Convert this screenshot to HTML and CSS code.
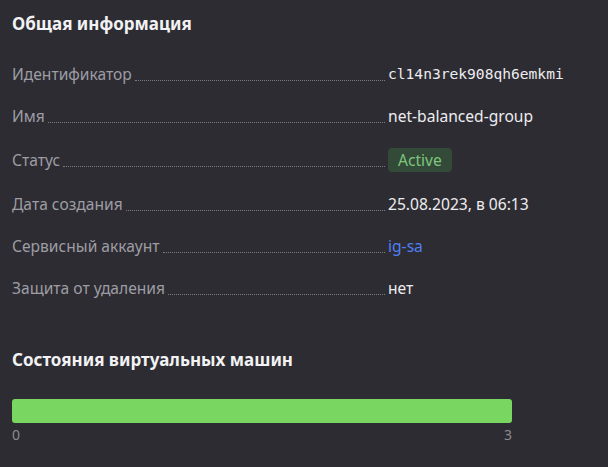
FILE: index.html
```html
<!DOCTYPE html>
<html lang="ru">
<head>
<meta charset="utf-8">
<title>Общая информация</title>
<link rel="stylesheet" href="styles.css">
</head>
<body>
<main class="page">
  <section class="info">
    <h2 class="title">Общая информация</h2>
    <dl class="list">
      <div class="row">
        <dt class="label"><span class="label-text">Идентификатор</span><span class="leader"></span></dt>
        <dd class="value mono">cl14n3rek908qh6emkmi</dd>
      </div>
      <div class="row">
        <dt class="label"><span class="label-text">Имя</span><span class="leader"></span></dt>
        <dd class="value">net-balanced-group</dd>
      </div>
      <div class="row row-status">
        <dt class="label"><span class="label-text">Статус</span><span class="leader"></span></dt>
        <dd class="value"><span class="badge">Active</span></dd>
      </div>
      <div class="row">
        <dt class="label"><span class="label-text">Дата создания</span><span class="leader"></span></dt>
        <dd class="value">25.08.2023, в 06:13</dd>
      </div>
      <div class="row">
        <dt class="label"><span class="label-text">Сервисный аккаунт</span><span class="leader"></span></dt>
        <dd class="value"><a class="link" href="#">ig-sa</a></dd>
      </div>
      <div class="row">
        <dt class="label"><span class="label-text">Защита от удаления</span><span class="leader"></span></dt>
        <dd class="value">нет</dd>
      </div>
    </dl>
  </section>
  <section class="vms">
    <h2 class="title">Состояния виртуальных машин</h2>
    <div class="chart">
      <div class="bar"><div class="bar-fill" style="width:100%"></div></div>
      <div class="axis"><span>0</span><span>3</span></div>
    </div>
  </section>
</main>
</body>
</html>
```
FILE: styles.css
```css
* { box-sizing: border-box; }
html, body { margin: 0; padding: 0; }
body {
  background: #2d2c33;
  color: #ececee;
  font-family: "Noto Sans", "Open Sans", sans-serif;
  font-size: 15.6px;
  line-height: 20px;
}
.page {
  padding: 12px 12px 0 12px;
  display: flex;
  flex-direction: column;
}
.title {
  margin: 0;
  font-size: 17px;
  line-height: 24px;
  font-weight: 700;
  color: #f2f2f4;
}
.list {
  margin: 28px 0 0 0;
  display: flex;
  flex-direction: column;
  gap: 22px;
}
.row {
  display: flex;
  align-items: center;
  min-height: 20px;
}
.label {
  width: 373px;
  flex: none;
  display: flex;
  align-items: flex-start;
  color: #9d9da3;
  margin: 0;
  height: 20px;
}
.label-text { white-space: nowrap; }
.leader {
  flex: 1;
  height: 17px;
  margin-left: 3px;
  border-bottom: 1px dotted #7a7a80;
}
.value {
  margin: 0 0 0 3px;
  color: #ededf0;
  white-space: nowrap;
}
.mono {
  font-family: "DejaVu Sans Mono", monospace;
  font-size: 14.6px;
}
.badge {
  display: inline-block;
  height: 24px;
  line-height: 24px;
  padding: 0 10px;
  border-radius: 4px;
  background: #344a39;
  color: #7cc67d;
}
.link {
  color: #4f7ff2;
  text-decoration: none;
}
.vms {
  margin-top: 50px;
}
.chart {
  margin-top: 27px;
  width: 500px;
}
.bar {
  height: 24px;
  border-radius: 3px;
  overflow: hidden;
  background: #3a3940;
}
.bar-fill {
  height: 100%;
  background: #79d660;
}
.axis {
  margin-top: 4px;
  display: flex;
  justify-content: space-between;
  font-size: 14px;
  line-height: 16px;
  color: #8b8b90;
}
```
